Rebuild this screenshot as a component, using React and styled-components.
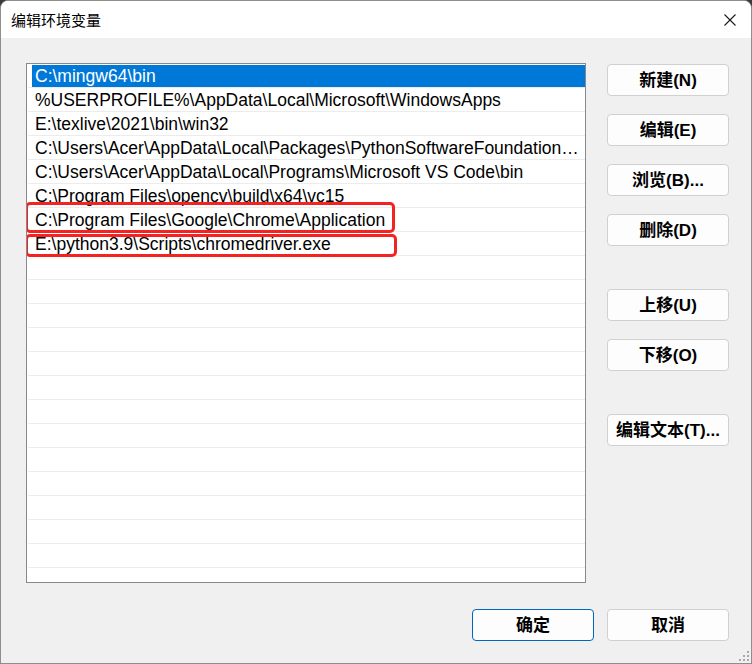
import React from "react";
import styled, { createGlobalStyle, css } from "styled-components";

const GlobalStyle = createGlobalStyle`
  html, body {
    margin: 0;
    padding: 0;
    background: #3a3a3a;
  }
  * { box-sizing: border-box; }
`;

const Window = styled.div`
  position: relative;
  width: 752px;
  height: 664px;
  border: 1px solid #8e8e8e;
  border-radius: 8px 8px 0 0;
  overflow: hidden;
  background: #f0f0f0;
  display: flex;
  flex-direction: column;
  font-family: "Liberation Sans", "Noto Sans CJK SC", sans-serif;
`;

const TitleBar = styled.div`
  height: 37px;
  flex: none;
  background: #ffffff;
  display: flex;
  align-items: center;
  justify-content: space-between;
  padding: 0 15px 0 10px;
`;

const Title = styled.span`
  font-family: "Noto Sans CJK SC", sans-serif;
  font-size: 15px;
  color: #000;
  margin-top: -1px;
`;

const CloseButton = styled.button`
  width: 12px;
  height: 12px;
  padding: 0;
  border: none;
  background: transparent;
  display: flex;
`;

const Body = styled.div`
  flex: 1;
  display: flex;
  flex-direction: column;
  padding: 25px 22px 0 25px;
`;

const Main = styled.div`
  display: flex;
  gap: 21px;
`;

const ListBox = styled.div`
  position: relative;
  width: 560px;
  height: 520px;
  border: 1px solid #858a90;
  background: #ffffff;
  padding-left: 1px;
  overflow: hidden;
`;

const Row = styled.div`
  height: 24px;
  display: flex;
  border-bottom: 1px solid #ececec;
`;

const Cell = styled.div`
  flex: 1;
  min-width: 0;
  margin-left: 4px;
  padding: 2px 2px 0 3px;
  font-family: "Liberation Sans", sans-serif;
  font-size: 17.5px;
  line-height: 21px;
  white-space: nowrap;
  overflow: hidden;
  text-overflow: ellipsis;
  color: #000;
  ${(p) =>
    p.$selected &&
    css`
      background: #0078d7;
      color: #ffffff;
      margin-top: 1px;
      padding-top: 1px;
    `}
`;

const Highlight = styled.div`
  position: absolute;
  left: ${(p) => p.$left}px;
  top: ${(p) => p.$top}px;
  width: ${(p) => p.$width}px;
  height: ${(p) => p.$height}px;
  border: 3px solid #f52222;
  border-radius: 5px;
  pointer-events: none;
`;

const ButtonColumn = styled.div`
  display: flex;
  flex-direction: column;
  gap: 43px;
  padding-top: 1px;
`;

const ButtonGroup = styled.div`
  display: flex;
  flex-direction: column;
  gap: 18px;
`;

const Button = styled.button`
  width: 122px;
  height: 32px;
  padding: 2px 0 0;
  border: 1px solid ${(p) => (p.$primary ? "#0067c0" : "#d0d0d0")};
  border-radius: 4px;
  background: #fdfdfd;
  color: #000;
  font-family: "Liberation Sans", "Noto Sans CJK SC", sans-serif;
  font-weight: 700;
  font-size: 17px;
  line-height: 28px;
  text-align: center;
  white-space: nowrap;
`;

const Footer = styled.div`
  display: flex;
  justify-content: flex-end;
  gap: 13px;
  margin-top: 26px;
`;

const Grip = styled.svg`
  position: absolute;
  right: 1px;
  bottom: 1px;
`;

const paths = [
  "C:\\mingw64\\bin",
  "%USERPROFILE%\\AppData\\Local\\Microsoft\\WindowsApps",
  "E:\\texlive\\2021\\bin\\win32",
  "C:\\Users\\Acer\\AppData\\Local\\Packages\\PythonSoftwareFoundation.Python.3.9_qbz5n2kfra8p0\\LocalCache\\local-packages\\Python39\\Scripts",
  "C:\\Users\\Acer\\AppData\\Local\\Programs\\Microsoft VS Code\\bin",
  "C:\\Program Files\\opencv\\build\\x64\\vc15",
  "C:\\Program Files\\Google\\Chrome\\Application",
  "E:\\python3.9\\Scripts\\chromedriver.exe",
];

const TOTAL_ROWS = 22;

export default function App() {
  const rows = Array.from({ length: TOTAL_ROWS }, (_, i) => paths[i] ?? "");
  return (
    <>
      <GlobalStyle />
      <Window>
        <TitleBar>
          <Title>编辑环境变量</Title>
          <CloseButton aria-label="关闭">
            <svg width="12" height="12" viewBox="0 0 12 12">
              <path d="M0.5 0.5 L11.5 11.5 M11.5 0.5 L0.5 11.5" stroke="#1a1a1a" strokeWidth="1.1" fill="none" />
            </svg>
          </CloseButton>
        </TitleBar>
        <Body>
          <Main>
            <ListBox>
              {rows.map((text, i) => (
                <Row key={i}>
                  <Cell $selected={i === 0}>{text}</Cell>
                </Row>
              ))}
              <Highlight $left={-2} $top={138} $width={370} $height={31} />
              <Highlight $left={-2} $top={170} $width={372} $height={23} />
            </ListBox>
            <ButtonColumn>
              <ButtonGroup>
                <Button>新建(N)</Button>
                <Button>编辑(E)</Button>
                <Button>浏览(B)...</Button>
                <Button>删除(D)</Button>
              </ButtonGroup>
              <ButtonGroup>
                <Button>上移(U)</Button>
                <Button>下移(O)</Button>
              </ButtonGroup>
              <ButtonGroup>
                <Button>编辑文本(T)...</Button>
              </ButtonGroup>
            </ButtonColumn>
          </Main>
          <Footer>
            <Button $primary>确定</Button>
            <Button>取消</Button>
          </Footer>
        </Body>
        <Grip width="12" height="12" viewBox="0 0 12 12">
          <g fill="#a8a8a8">
            <rect x="9" y="1" width="2" height="2" />
            <rect x="5" y="5" width="2" height="2" />
            <rect x="9" y="5" width="2" height="2" />
            <rect x="1" y="9" width="2" height="2" />
            <rect x="5" y="9" width="2" height="2" />
            <rect x="9" y="9" width="2" height="2" />
          </g>
        </Grip>
      </Window>
    </>
  );
}
